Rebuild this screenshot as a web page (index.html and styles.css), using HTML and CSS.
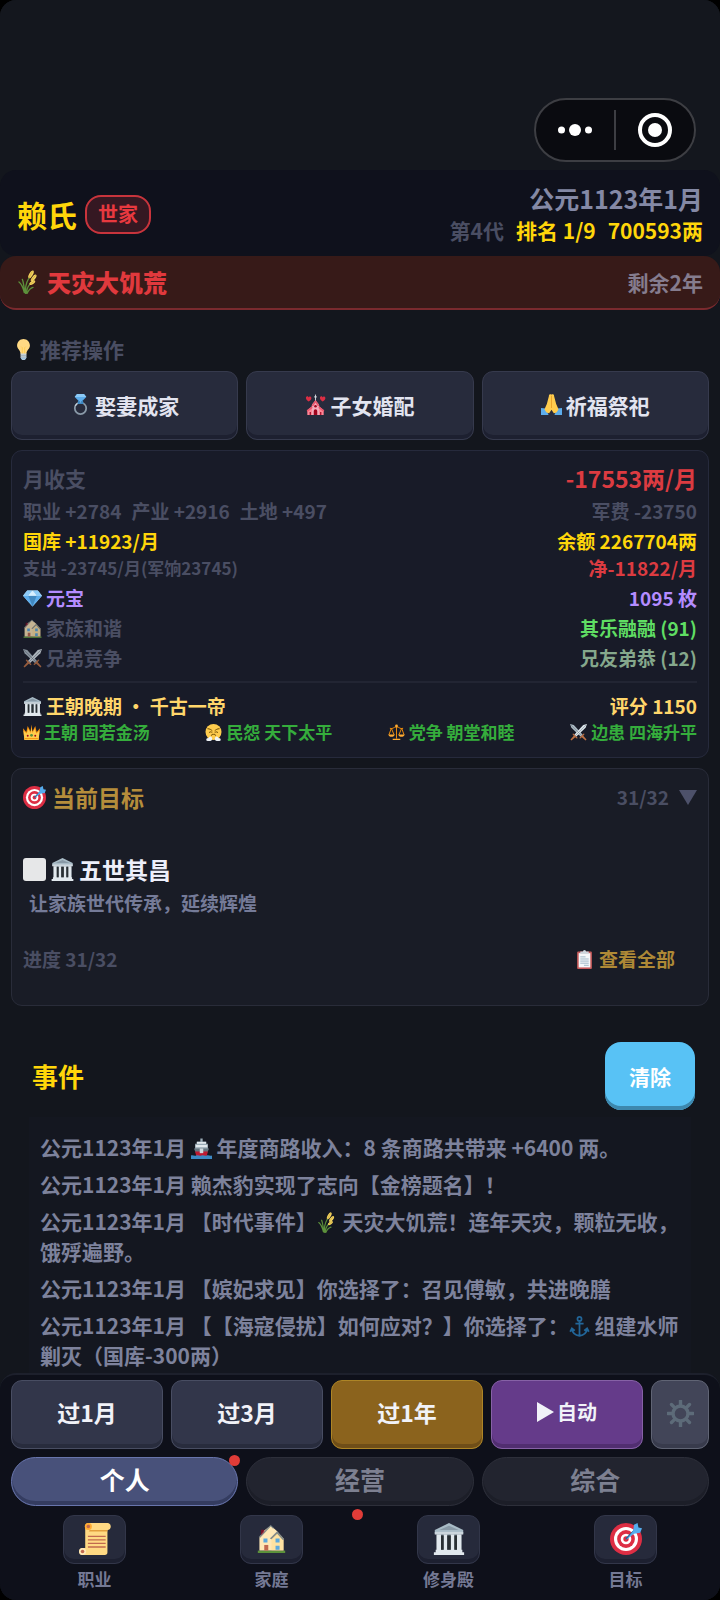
FILE: index.html
```html
<!DOCTYPE html>
<html lang="zh-CN">
<head>
<meta charset="utf-8">
<meta name="viewport" content="width=device-width, initial-scale=1">
<title>赖氏世家</title>
<link rel="stylesheet" href="styles.css">
</head>
<body>
<svg class="sprite" aria-hidden="true">
  <symbol id="rice" viewBox="0 0 36 36">
    <g fill="none" stroke="#5c913b" stroke-width="2" stroke-linecap="round"><path d="M13 35C12 26 14 16 21 8M14 34C15 27 17 22 23 18M11 34C9 26 7 21 3 18M12 34C10 24 10 19 8 14M15 35c3-6 5-8 9-9"/></g>
    <g fill="#f4d35e"><ellipse cx="21" cy="6.500" rx="2.800" ry="6.500" transform="rotate(30 21 6.500)"/><ellipse cx="25" cy="12" rx="2.600" ry="6" transform="rotate(38 25 12)"/><ellipse cx="23" cy="19" rx="2.400" ry="5" transform="rotate(55 23 19)"/></g>
    <path d="M18 12l5-10M21 16l7-8M20 21l6-4" stroke="#c1a23c" stroke-width="1" fill="none"/>
  </symbol>
  <symbol id="bulb" viewBox="0 0 36 36">
    <path fill="#ffd983" d="M29 11.1C29 17 23 19 23 26h-10C13 19 7 17 7 11.1 7 5 12 0 18 0s11 5 11 11.1z"/>
    <path d="M16 26V15l-2-2M20 26V15l2-2" stroke="#ffcc4d" stroke-width="1.5" fill="none"/>
    <path fill="#ccd6dd" d="M13 25h10v7l-3 4h-4l-3-4z"/><path d="M13 28h10M13 31h10" stroke="#8899a6"/>
    <path fill="#9ec3df" d="M13 32h10l-2 3h-6z"/>
  </symbol>
  <symbol id="ring" viewBox="0 0 36 36">
    <circle cx="18" cy="24.5" r="9.8" fill="none" stroke="#8a9aa8" stroke-width="3"/>
    <path d="M9 20a10 10 0 0 1 7-5" fill="none" stroke="#ccd6dd" stroke-width="2"/>
    <path fill="#5dadec" d="M12 0h12l4 5-10 10L8 5z"/><path fill="#8ccaf7" d="M12 0h12l4 5H8z"/><path fill="#3b88c3" d="M14 10l4 6 4-6 1 7H13z"/>
  </symbol>
  <symbol id="wedding" viewBox="0 0 36 36">
    <path fill="#ff8697" d="M4 36V28l8-7h12l8 7v8z"/><path fill="#f4abba" d="M12 36V18l6-7 6 7v18z"/>
    <path fill="#ea596e" d="M3 28l9-7 1 3-9 7zM33 28l-9-7-1 3 9 7zM11 20l7-10 7 10-3 1-4-6-4 6z"/>
    <path fill="#a0041e" d="M15 36v-7a3 3 0 0 1 6 0v7zM8 31h2v5H8zM26 31h2v5h-2z"/><circle cx="18" cy="21" r="2.200" fill="#a0041e"/>
    <path d="M18 11V1M15.500 5h5" stroke="#dfe5ea" stroke-width="1.500"/>
    <path fill="#dd2e44" d="M6 13C0 9 1 4 4 4c1 0 2 1 2 2 1-3 5-2 5 1 0 3-3 5-5 6zM30 13c-6-4-5-9-2-9 1 0 2 1 2 2 1-3 5-2 5 1 0 3-3 5-5 6z"/>
  </symbol>
  <symbol id="pray" viewBox="0 0 36 36">
    <path fill="#5dadec" d="M0 24l8 1 5 11H0zM36 24l-8 1-5 11h13z"/>
    <path fill="#ffcc4d" d="M17.500 1c-2-1-4 0-4 3L10 17l-4 9c2 5 5 7 8 7l4-6 4 6c3 0 6-2 8-7l-4-9-3.500-13c0-3-2-4-4-3z"/>
    <path d="M18 3v21" stroke="#e79e28" stroke-width="1.500"/>
  </symbol>
  <symbol id="gem" viewBox="0 0 36 36">
    <path fill="#bdddf4" d="M8 3h20l8 10-18 20L0 13z"/><path fill="#5dadec" d="M0 13h36L18 33z"/><path fill="#8ccaf7" d="M8 3L0 13h10l8-10 8 10h10L28 3z"/><path fill="#4289c1" d="M10 13h16l-8 20z"/><path fill="#d7efff" d="M18 3l8 10H10z"/>
  </symbol>
  <symbol id="house" viewBox="0 0 36 36">
    <path fill="#5c913b" d="M1 33h34v3H1z"/>
    <path fill="#ffe8b6" d="M3 33V16l6-8 8-6 8 7 8 9v15z"/>
    <path fill="#ffd983" d="M18 33V19l7-8 8 8v14z" opacity=".4"/>
    <path fill="#66757f" d="M2 16L17 1l4 4-1 1-3-3L4 17zM16 18l9-9 9 10-2 1-7-8-7 7z" opacity=".8"/>
    <path fill="#5da9dd" d="M8 18h5v5H8zM23 18h5v5h-5zM23 27h5v5h-5z"/><path fill="#c1694f" d="M9 26h5v7H9z"/><path fill="#a0041e" d="M5 7h4v3l-4 4z" opacity=".6"/>
  </symbol>
  <symbol id="swords" viewBox="0 0 36 36">
    <path fill="#aab8c2" d="M0 0l8 2 19 21-4 4L3 8z"/><path fill="#dce5eb" d="M36 0l-8 2L9 23l4 4L33 8z"/>
    <path d="M2 2l23 23M34 2L11 25" stroke="#66757f" stroke-width="1"/>
    <path fill="#be7145" d="M20 29l9-9 2 1-3 4 7 8-2 2-8-7-4 3zM16 29l-9-9-2 1 3 4-7 8 2 2 8-7 4 3z"/>
  </symbol>
  <symbol id="temple" viewBox="0 0 36 36">
    <path fill="#66757f" d="M4 12h28v19H4z"/><path fill="#a8bbc6" d="M18 0L2 8v4h32V8z"/><path fill="#ccd6dd" d="M2 10h32v3H2z"/>
    <path fill="#e1e8ed" d="M4 13h5v17H4zM12 13h4v17h-4zM20 13h4v17h-4zM27 13h5v17h-5zM3 30h30v3H3zM1 33h34v3H1z"/>
    <path fill="#292f33" d="M9 14h3v16H9zM16 14h4v16h-4zM24 14h3v16h-3z"/><path fill="#8899a6" d="M18 3l11 5H7z"/>
  </symbol>
  <symbol id="crown" viewBox="0 0 36 36">
    <path fill="#f4900c" d="M3 34L0 9l7 8 3-13 6 12 2-15 2 15 6-12 3 13 7-8-3 25z"/><path fill="#ffcc4d" d="M3 34L1 14l7 6 3-10 5 9 2-11 2 11 5-9 3 10 7-6-2 20z"/>
    <path fill="#f4900c" d="M4 30h28v2H4z"/><circle cx="18" cy="24" r="3" fill="#5c913b"/><circle cx="10" cy="25" r="2" fill="#a0041e"/><circle cx="26" cy="25" r="2" fill="#a0041e"/>
  </symbol>
  <symbol id="angry" viewBox="0 0 36 36">
    <circle cx="18" cy="17" r="17" fill="#ffcc4d"/><path d="M6 10c4 0 7 2 9 4M30 10c-4 0-7 2-9 4M13 24c3-3 7-3 10 0M9 18c2-2 4-2 6 0M21 18c2-2 4-2 6 0" fill="none" stroke="#664500" stroke-width="2" stroke-linecap="round"/>
    <path fill="#eef3f7" d="M13 27c-3-1-5 1-5 3-4-1-6 2-5 5 3 2 11 2 12-2 1-2 0-4-2-6zM23 27c3-1 5 1 5 3 4-1 6 2 5 5-3 2-11 2-12-2-1-2 0-4 2-6z"/>
  </symbol>
  <symbol id="scales" viewBox="0 0 36 36">
    <g fill="none" stroke="#f4900c" stroke-width="2"><path d="M18 3v28M4 9c6 3 8-3 14-3s8 6 14 3M7 9L2 23M7 9l6 14M29 9l-6 14M29 9l5 14"/></g>
    <path fill="#ffac33" d="M1 22h13c0 7-13 7-13 0zM22 22h13c0 7-13 7-13 0zM10 31h16v3H10z"/><circle cx="18" cy="4" r="3" fill="#ffac33"/>
  </symbol>
  <symbol id="target" viewBox="0 0 36 36">
    <circle cx="18" cy="18" r="18" fill="#dd2e44"/><circle cx="18" cy="18" r="13.500" fill="#fff"/><circle cx="18" cy="18" r="10" fill="#dd2e44"/><circle cx="18" cy="18" r="6" fill="#fff"/><circle cx="18" cy="18" r="3" fill="#dd2e44"/>
    <path d="M18 18L31 5" stroke="#226699" stroke-width="2"/><path fill="#55acee" d="M18 19l8-10 1-7 4-2 1 5 4 1-2 5-7 1z"/>
  </symbol>
  <symbol id="clipboard" viewBox="0 0 36 36">
    <rect x="4" y="3" width="28" height="33" rx="2" fill="#c65a5a"/><path fill="#f5f8fa" d="M7 6h22v27H7z"/><path fill="#ccd6dd" d="M10 7V3h5a3 3 0 0 1 6 0h5v4z"/>
    <path d="M10 13h10M10 17h16M10 21h16M10 25h16M17 29h9" stroke="#8aa9ba" stroke-width="1.500"/>
  </symbol>
  <symbol id="ship" viewBox="0 0 36 36">
    <path fill="#99aab5" d="M16 1h4v5h6v4h3v9H7v-9h3V6h6z"/><path fill="#e1e8ed" d="M10 7h16v3H10zM8 12h20v4H8z"/><path fill="#66757f" d="M5 18h26l-3 7H8z"/><path fill="#be1931" d="M7 23h22l-2 8H9z"/><path fill="#ccd6dd" d="M15 18h6v8h-6z"/>
    <path fill="#3b88c3" d="M0 30c3-2 6 2 9 0s6 2 9 0 6 2 9 0 6 2 9 0v6H0z"/>
  </symbol>
  <symbol id="anchor" viewBox="0 0 36 36">
    <g fill="none" stroke="#226699" stroke-width="3"><circle cx="18" cy="5" r="3.500"/><path d="M18 9v24M11 13h14M5 22c1 8 6 11 13 12 7-1 12-4 13-12M2 27l3-6 5 4M34 27l-3-6-5 4"/></g>
  </symbol>
  <symbol id="gear" viewBox="0 0 36 36">
    <g fill="none" stroke="#5d6b79"><circle cx="18" cy="18" r="10" stroke-width="4.500"/><path d="M18 1v6M18 29v6M1 18h6M29 18h6M6 6l4.500 4.500M25.500 25.500L30 30M6 30l4.500-4.500M25.500 10.500L30 6" stroke-width="4.500" stroke-linecap="round"/></g>
  </symbol>
  <symbol id="scroll" viewBox="0 0 36 36">
    <path fill="#ffd983" d="M7 4a4 4 0 0 1 4-4h21c5 0 5 8 0 8v25a3 3 0 0 1-3 3H4c-5 0-5-8 0-8h3z"/>
    <path fill="#e39f3d" d="M12 8h20v1.500H11z"/><circle cx="10.500" cy="4" r="4" fill="#ffac33"/><circle cx="10.500" cy="4" r="2" fill="#c1694f"/><circle cx="4" cy="32" r="4" fill="#ffe8b6"/><circle cx="4" cy="32" r="2" fill="#c1694f"/>
    <path d="M10 15h20M10 19h20M10 23h20M10 27h20" stroke="#c1694f" stroke-width="1.500"/>
  </symbol>
</svg>

<div class="app">
  <div class="statusbar">
    <div class="capsule">
      <button class="capsule-btn" aria-label="更多"><svg width="34" height="14" viewBox="0 0 34 14" fill="#fff"><circle cx="3.500" cy="7" r="3.500"/><circle cx="17" cy="7" r="6"/><circle cx="30.500" cy="7" r="3.500"/></svg></button>
      <button class="capsule-btn" aria-label="关闭"><svg width="36" height="36" viewBox="0 0 36 36"><circle cx="18" cy="18" r="15" fill="none" stroke="#fff" stroke-width="4"/><circle cx="18" cy="18" r="7" fill="#fff"/></svg></button>
    </div>
  </div>

  <header class="header">
    <div class="clan"><h1 class="clan-name">赖氏</h1><span class="badge">世家</span></div>
    <div class="summary">
      <div class="date">公元1123年1月</div>
      <div class="stats"><span class="dim">第4代</span><span>排名 1/9</span><span>700593两</span></div>
    </div>
  </header>

  <div class="alert">
    <strong class="alert-title"><svg class="icon"><use href="#rice"/></svg>天灾大饥荒</strong>
    <span class="alert-time">剩余2年</span>
  </div>

  <main class="main">
    <section class="advice">
      <h2 class="advice-title"><svg class="icon"><use href="#bulb"/></svg>推荐操作</h2>
      <div class="advice-list">
        <button class="btn"><svg class="icon"><use href="#ring"/></svg>娶妻成家</button>
        <button class="btn"><svg class="icon"><use href="#wedding"/></svg>子女婚配</button>
        <button class="btn"><svg class="icon"><use href="#pray"/></svg>祈福祭祀</button>
      </div>
    </section>

    <section class="card">
      <div class="row row-lead"><span>月收支</span><span class="total">-17553两/月</span></div>
      <div class="row"><span class="parts"><span>职业 +2784</span><span>产业 +2916</span><span>土地 +497</span></span><span>军费 -23750</span></div>
      <div class="row gold"><span>国库 +11923/月</span><span>余额 2267704两</span></div>
      <div class="row row-tight"><span class="small">支出 -23745/月(军饷23745)</span><span class="red">净-11822/月</span></div>
      <div class="row violet"><span class="label"><svg class="icon"><use href="#gem"/></svg>元宝</span><span>1095 枚</span></div>
      <div class="row"><span class="label"><svg class="icon faded"><use href="#house"/></svg>家族和谐</span><span class="lime">其乐融融 (91)</span></div>
      <div class="row"><span class="label"><svg class="icon faded"><use href="#swords"/></svg>兄弟竞争</span><span class="sage">兄友弟恭 (12)</span></div>
      <hr class="rule">
      <div class="row amber"><span class="label"><svg class="icon"><use href="#temple"/></svg>王朝晚期 ・ 千古一帝</span><span>评分 1150</span></div>
      <div class="row realm">
        <span class="label"><svg class="icon"><use href="#crown"/></svg>王朝 固若金汤</span>
        <span class="label"><svg class="icon"><use href="#angry"/></svg>民怨 天下太平</span>
        <span class="label"><svg class="icon"><use href="#scales"/></svg>党争 朝堂和睦</span>
        <span class="label"><svg class="icon"><use href="#swords"/></svg>边患 四海升平</span>
      </div>
    </section>

    <section class="card goal">
      <div class="row"><h2 class="goal-title"><svg class="icon"><use href="#target"/></svg>当前目标</h2><button class="toggle">31/32<span class="caret"></span></button></div>
      <div class="goal-item">
        <label class="goal-name"><input class="check" type="checkbox"><svg class="icon"><use href="#temple"/></svg>五世其昌</label>
        <p class="goal-desc">让家族世代传承，延续辉煌</p>
      </div>
      <div class="row goal-foot"><span>进度 31/32</span><button class="view-all"><svg class="icon"><use href="#clipboard"/></svg>查看全部</button></div>
    </section>

    <section class="events">
      <div class="events-head"><h2 class="events-title">事件</h2><button class="clear">清除</button></div>
      <ul class="log">
        <li>公元1123年1月 <svg class="icon"><use href="#ship"/></svg> 年度商路收入：8 条商路共带来 +6400 两。</li>
        <li>公元1123年1月 赖杰豹实现了志向【金榜题名】！</li>
        <li>公元1123年1月 【时代事件】<svg class="icon"><use href="#rice"/></svg> 天灾大饥荒！连年天灾，颗粒无收，饿殍遍野。</li>
        <li>公元1123年1月 【嫔妃求见】你选择了：召见傅敏，共进晚膳</li>
        <li>公元1123年1月 【【海寇侵扰】如何应对？】你选择了：<svg class="icon"><use href="#anchor"/></svg> 组建水师剿灭（国库-300两）</li>
      </ul>
    </section>
  </main>

  <footer class="dock">
    <div class="advance">
      <button class="btn step">过1月</button>
      <button class="btn step">过3月</button>
      <button class="btn step year">过1年</button>
      <button class="btn step auto"><span class="play"></span>自动</button>
      <button class="btn settings" aria-label="设置"><svg width="27" height="27"><use href="#gear"/></svg></button>
    </div>
    <div class="tabs">
      <button class="tab active">个人<span class="dot"></span></button>
      <button class="tab">经营</button>
      <button class="tab">综合</button>
    </div>
    <nav class="nav">
      <a class="nav-item" href="#"><span class="tile"><svg class="icon"><use href="#scroll"/></svg></span>职业</a>
      <a class="nav-item" href="#"><span class="tile"><svg class="icon home"><use href="#house"/></svg></span>家庭<span class="dot"></span></a>
      <a class="nav-item" href="#"><span class="tile"><svg class="icon"><use href="#temple"/></svg></span>修身殿</a>
      <a class="nav-item" href="#"><span class="tile"><svg class="icon"><use href="#target"/></svg></span>目标</a>
    </nav>
  </footer>
</div>
</body>
</html>
```

FILE: styles.css
```css
* { box-sizing: border-box; }

body {
  margin: 0;
  background: #000;
  color: #4a4e63;
  font: 700 19px/30px "Noto Sans CJK SC", sans-serif;
  text-spacing-trim: space-all;
}

h1, h2, p, ul { margin: 0; padding: 0; }
button { margin: 0; padding: 0; border: 0; background: none; color: inherit; font: inherit; }
a { color: inherit; text-decoration: none; }

.sprite { position: absolute; width: 0; height: 0; }
.icon { width: 1em; height: 1em; flex: none; }
.faded { opacity: .75; }

.app {
  display: flex;
  flex-direction: column;
  height: 100vh;
  overflow: hidden;
  border-radius: 16px;
  background: #13161d;
}

.statusbar { display: flex; justify-content: flex-end; padding: 98px 24px 8px; background: #14171e; }
.capsule { display: flex; align-items: center; width: 162px; height: 64px; border: 2px solid #3d3e43; border-radius: 32px; background: #0a0b10; }
.capsule-btn { display: flex; flex: 1; align-items: center; justify-content: center; height: 40px; }
.capsule-btn + .capsule-btn { border-left: 2px solid #3d3e43; }

.header { display: flex; align-items: center; justify-content: space-between; padding: 12px 17px 10px; border-radius: 16px; background: #0f111c; }
.clan { display: flex; align-items: center; gap: 8px; }
.clan-name { color: #ffd60a; font-size: 30px; line-height: 40px; }
.badge { padding: 0 11px 2px; border: 2px solid #c8343c; border-radius: 16px; background: #351822; color: #e8393f; font-size: 20px; line-height: 33px; }
.summary { text-align: right; line-height: 32px; }
.date { color: #8489a5; font-size: 25px; }
.stats { display: flex; justify-content: flex-end; gap: 12px; color: #ffd60a; font-size: 21px; }
.dim { color: #4a4e63; }

.alert { display: flex; align-items: center; justify-content: space-between; height: 54px; padding: 0 17px; border-bottom: 2px solid #7a2a2e; border-radius: 16px; background: #371a18; }
.alert-title { display: flex; align-items: center; gap: 6px; color: #e0393d; font-size: 24px; }
.alert-time { color: #857c8e; font-size: 21px; }

.main { display: flex; flex: 1; flex-direction: column; gap: 10px; min-height: 0; overflow: hidden; padding: 24px 11px 0; }
.main > * { flex: none; }

.advice-title { display: flex; align-items: center; gap: 6px; margin-bottom: 7px; padding-left: 2px; font-size: 21px; }
.advice-list { display: grid; grid-template-columns: repeat(3, 1fr); gap: 8px; }

.btn {
  display: flex;
  align-items: center;
  justify-content: center;
  gap: 4px;
  height: 69px;
  padding-bottom: 2px;
  border: 1px solid #363a4d;
  border-radius: 11px;
  background: #272b3c;
  box-shadow: inset 0 -4px #1d2030;
  color: #e2e4f0;
  font-size: 21px;
}

.card { padding: 12px 11px 14px; border: 1px solid #262a3c; border-radius: 11px; background: #181b28; }
.row { display: flex; align-items: center; justify-content: space-between; height: 30px; }
.row-lead { margin-bottom: 3px; font-size: 21px; }
.row-tight { height: 24px; margin-bottom: 3px; }
.label { display: flex; align-items: center; gap: 4px; }
.parts { display: flex; gap: 10px; }
.total { color: #dc3b41; font-size: 23px; }
.small { font-size: 17px; }
.gold { color: #ffd60a; }
.red { color: #dc3b41; }
.violet { color: #b48cff; }
.lime { color: #5fdd63; }
.sage { color: #85a88c; }
.amber { color: #ffd66b; }
.realm { height: 22px; color: #35ad3c; font-size: 17px; }
.rule { margin: 8px 0; border: 0; border-top: 2px solid #222533; }

.goal { padding-top: 13px; background: #191c26; border-color: #292c39; }
.goal-title { display: flex; align-items: center; gap: 6px; color: #b58d3b; font-size: 23px; }
.toggle { display: flex; align-items: center; gap: 10px; }
.caret { border: 9px solid transparent; border-top: 15px solid #4d516a; border-bottom: 0; }
.goal-item { padding-top: 42px; }
.goal-name { display: flex; align-items: center; gap: 5px; color: #edeffa; font-size: 23px; }
.check { appearance: none; width: 23px; height: 23px; margin: 0; border-radius: 3px; background: #e6e7e8; }
.goal-desc { margin: 4px 0 26px; padding-left: 6px; color: #757b98; }
.goal-foot { margin-bottom: 17px; }
.view-all { display: flex; align-items: center; gap: 5px; padding-right: 22px; color: #ae8936; }

.events { padding-top: 26px; }
.events-head { display: flex; align-items: center; justify-content: space-between; padding: 0 14px 0 21px; }
.events-title { color: #ffd60a; font-size: 26px; }
.clear { width: 90px; height: 68px; border-radius: 16px; background: #58c2f5; box-shadow: inset 0 -4px #3d88ae; color: #fff; font-size: 21px; }
.log { display: flex; flex-direction: column; gap: 7px; margin: 7px 18px 0; padding: 15px 2px 15px 11px; background: #141720; color: #7d829c; font-size: 21px; list-style: none; }
.log .icon { vertical-align: -3px; }

.dock { padding: 5px 11px 7px; border-top: 2px solid #1d202c; border-radius: 16px 16px 0 0; background: #0e101a; }
.advance { display: grid; grid-template-columns: repeat(4, 1fr) 58px; gap: 8px; }
.step { padding-bottom: 6px; border-color: #484d62; background: #32364a; box-shadow: inset 0 -4px #282c3d; color: #f1f2f8; font-size: 23px; }
.year { border-color: #ad8526; background: #8b631d; box-shadow: inset 0 -4px #6f4e18; }
.auto { gap: 3px; border-color: #8661a6; background: #653b8a; box-shadow: inset 0 -4px #512e70; font-size: 20px; }
.play { border: 10px solid transparent; border-left: 17px solid #f1f2f8; border-right: 0; }
.settings { border-color: #606474; background: #424558; box-shadow: inset 0 -4px #383b4c; }

.tabs { display: grid; grid-template-columns: repeat(3, 1fr); gap: 8px; margin: 8px 0 9px; }
.tab { position: relative; height: 49px; padding-bottom: 5px; border: 1px solid #2d2f3a; border-radius: 25px; background: #22242f; box-shadow: inset 0 -4px #1c1e28; color: #7d8091; font-size: 25px; }
.tab.active { border-color: #6875ad; background: #48517a; box-shadow: inset 0 -4px #343c60; color: #fff; }
.dot { position: absolute; width: 11px; height: 11px; border-radius: 50%; background: #e03c38; }
.tab .dot { top: -3px; right: -3px; }

.nav { display: grid; grid-template-columns: repeat(4, 1fr); margin: 0 -5px; }
.nav-item { position: relative; display: flex; flex-direction: column; align-items: center; gap: 2px; padding-bottom: 1px; color: #747994; font-size: 17px; line-height: 26px; }
.nav-item .dot { top: -6px; right: -3px; }
.tile { display: flex; align-items: center; justify-content: center; width: 63px; height: 49px; padding-bottom: 2px; border: 1px solid #323649; border-radius: 11px; background: #262a3b; box-shadow: inset 0 -4px #1d2030; font-size: 32px; }
.home { font-size: 29px; }
```
